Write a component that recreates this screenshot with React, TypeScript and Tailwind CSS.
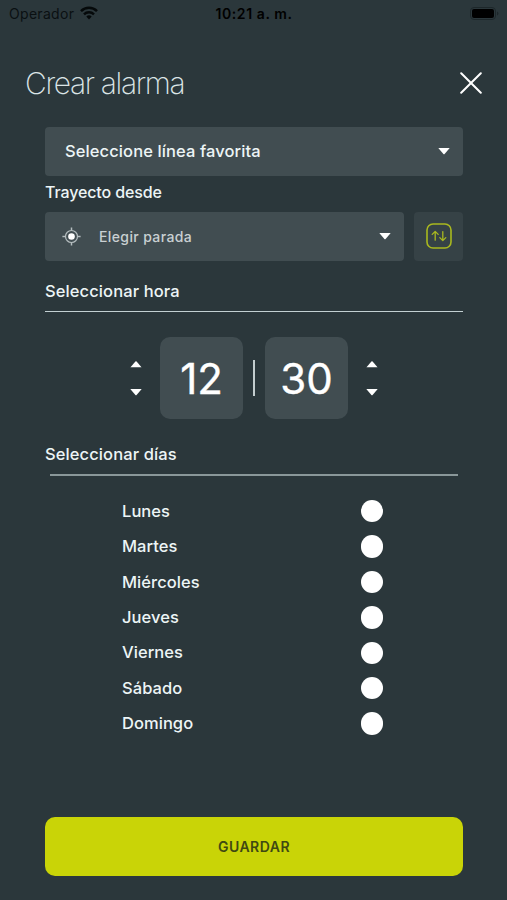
const days = ["Lunes", "Martes", "Miércoles", "Jueves", "Viernes", "Sábado", "Domingo"];

function Caret({ up = false }: { up?: boolean }) {
  return (
    <svg
      className={up ? "w-3 h-[6.5px] rotate-180" : "w-3 h-[6.5px]"}
      viewBox="0 0 12 7"
      preserveAspectRatio="none"
      fill="#fff"
    >
      <path d="M0.3 0h11.4L6.6 6.5q-.6.6-1.2 0z" />
    </svg>
  );
}

function StatusBar() {
  return (
    <div className="grid grid-cols-3 items-center h-[27px] pl-[9px] pr-2 text-black">
      <div className="flex items-center gap-[6px]">
        <span className="text-[14px] tracking-[0.3px] text-[#0a1012]">Operador</span>
        <svg className="w-[18px] h-[14px] -mt-[2px]" viewBox="0 0 18 14" fill="none" stroke="#05090a">
          <path d="M1 5.1a11.4 11.4 0 0 1 16 0" strokeWidth="2.5" />
          <path d="M4 8.3a7 7 0 0 1 10 0" strokeWidth="2.4" />
          <path d="M9 13.4L6.3 10.6a3.9 3.9 0 0 1 5.4 0z" fill="#05090a" stroke="none" />
        </svg>
      </div>
      <span className="text-center text-[14px] font-semibold tracking-[0.6px] whitespace-nowrap">
        10:21 a. m.
      </span>
      <svg className="w-[29px] h-[13px] justify-self-end -mt-px" viewBox="0 0 29 13">
        <rect x="0.5" y="0.5" width="25" height="12" rx="3.5" fill="none" stroke="#1d272a" />
        <rect x="2" y="2" width="22" height="9" rx="2" fill="#000" />
        <path d="M27 4.5v4q1.4-.6 1.4-2t-1.4-2z" fill="#1d272a" />
      </svg>
    </div>
  );
}

function Stepper() {
  return (
    <div className="flex flex-col gap-[22px]">
      <Caret up />
      <Caret />
    </div>
  );
}

function TimeBox({ value }: { value: string }) {
  return (
    <div className="flex items-center justify-center w-[83.5px] h-[82.5px] rounded-[10px] bg-[#414d51] text-[42px] font-normal [-webkit-text-stroke:0.4px_white] text-white">
      {value}
    </div>
  );
}

export default function App() {
  return (
    <div className="w-[507px] h-[900px] flex flex-col overflow-hidden bg-[#2b373b] font-['Inter','Liberation_Sans',sans-serif] text-[#edf5f6]">
      <StatusBar />

      {/* Header */}
      <header className="flex items-center justify-between h-[50px] mt-[31px] pl-[25px] pr-[25px]">
        <h1 className="text-[30px] font-extralight tracking-[-1.35px] text-[#dce5e7]">Crear alarma</h1>
        <svg className="w-[22px] h-[22px]" viewBox="0 0 22 22" stroke="#fff" strokeWidth="2" strokeLinecap="round">
          <path d="M1.2 1.2l19.6 19.6M20.8 1.2L1.2 20.8" />
        </svg>
      </header>

      <main className="flex flex-col pl-[45px] pr-11 pt-[19px]">
        <div className="flex items-center justify-between h-[48.5px] pl-5 pr-[13.5px] rounded-[4px] bg-[#414d51]">
          <span className="text-[16.5px] font-medium tracking-[0.1px]">Seleccione línea favorita</span>
          <Caret />
        </div>

        <span className="h-[36.5px] leading-[33px] text-[16px] font-medium tracking-[-0.12px]">
          Trayecto desde
        </span>

        <div className="flex gap-[10px] h-[48.5px]">
          <div className="flex items-center flex-1 pl-[17px] pr-[13px] rounded-[4px] bg-[#414d51]">
            <svg className="w-[19px] h-[19px]" viewBox="0 0 19 19" fill="none" stroke="#b4bdbf" strokeWidth="1.2">
              <circle cx="9.5" cy="9.5" r="6" />
              <circle cx="9.5" cy="9.5" r="3.3" fill="#fff" stroke="none" />
              <path d="M9.5 0.4v3.2M9.5 15.4v3.2M0.4 9.5h3.2M15.4 9.5h3.2" strokeWidth="1.5" />
            </svg>
            <span className="flex-1 ml-[18px] text-[14px] font-medium tracking-[0.38px] text-[#c9d0d2]">
              Elegir parada
            </span>
            <Caret />
          </div>
          <div className="flex items-center justify-center w-[49px] rounded-[4px] bg-[#364246]">
            <svg
              className="w-[26px] h-[26px]"
              viewBox="0 0 26 26"
              fill="none"
              stroke="#a9b81f"
              strokeWidth="1.3"
              strokeLinecap="round"
              strokeLinejoin="round"
            >
              <rect x="1" y="1" width="24" height="24" rx="6" strokeWidth="1.6" />
              <path d="M9.2 17.2V8.6M6.2 11.4l3-3 3 3M16.8 8.6v8.8M13.8 14.6l3 3 3-3" />
            </svg>
          </div>
        </div>

        {/* Time */}
        <h2 className="h-[51.5px] leading-[60px] text-[16.5px] font-medium tracking-[0.1px] border-b border-[#c3d0d2]">
          Seleccionar hora
        </h2>
        <div className="flex items-center justify-center h-[82px] mt-[25px]">
          <Stepper />
          <div className="flex items-center ml-[18px] mr-[18px]">
            <TimeBox value="12" />
            <div className="w-[1.5px] h-9 mx-[10px] bg-[#c3cdcf]" />
            <TimeBox value="30" />
          </div>
          <Stepper />
        </div>

        {/* Days */}
        <h2 className="h-[55px] leading-[70px] text-[16.5px] font-medium tracking-[0.1px]">Seleccionar días</h2>
        <div className="h-[2px] ml-[5px] mr-[5px] bg-[#8a9799]" />
        <ul className="pt-[17.5px] pl-[77px] pr-20">
          {days.map((day) => (
            <li key={day} className="flex items-center justify-between h-[35.4px]">
              <span className="text-[16.5px] font-medium tracking-[0.05px]">{day}</span>
              <span className="w-[22.5px] h-[22.5px] rounded-full bg-white" />
            </li>
          ))}
        </ul>
      </main>

      <button className="mt-auto mb-[24.5px] ml-[45px] mr-11 h-[58.5px] rounded-[10px] bg-[#c9d407] text-[14px] font-semibold tracking-[0.5px] text-[#3f4912]">
        GUARDAR
      </button>
    </div>
  );
}
